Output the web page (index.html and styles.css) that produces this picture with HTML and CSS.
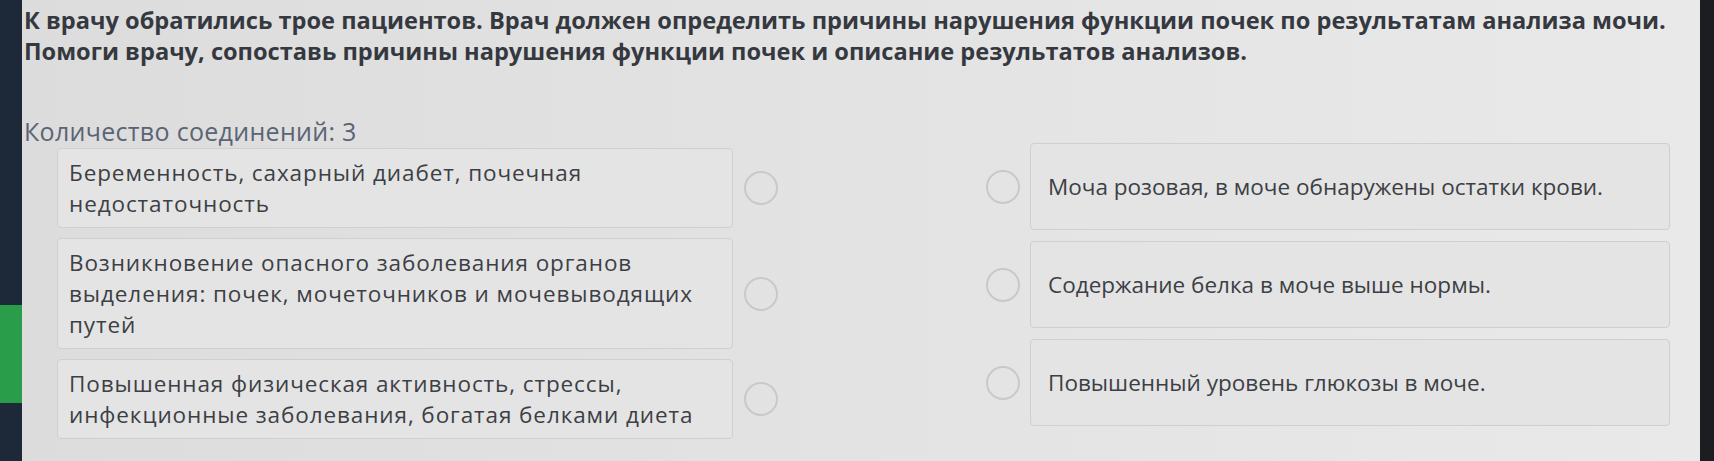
FILE: index.html
```html
<!DOCTYPE html>
<html lang="ru">
<head>
    <meta charset="UTF-8">
    <meta name="viewport" content="width=device-width, initial-scale=1.0">
    <title>Сопоставление</title>
    <link rel="stylesheet" href="styles.css">
</head>
<body>
    <div class="sidebar">
        <div class="sidebar-active"></div>
    </div>

    <div class="task">
        <!-- Question -->
        <p class="question">К врачу обратились трое пациентов. Врач должен определить причины нарушения функции почек по результатам анализа мочи. Помоги врачу, сопоставь причины нарушения функции почек и описание результатов анализов.</p>

        <p class="connections">Количество соединений: 3</p>

        <!-- Matching board -->
        <div class="board">
            <div class="column column-left">
                <div class="item">
                    <div class="card card-left">Беременность, сахарный диабет, почечная недостаточность</div>
                    <span class="dot"></span>
                </div>
                <div class="item">
                    <div class="card card-left">Возникновение опасного заболевания органов выделения: почек, мочеточников и мочевыводящих путей</div>
                    <span class="dot"></span>
                </div>
                <div class="item">
                    <div class="card card-left">Повышенная физическая активность, стрессы, инфекционные заболевания, богатая белками диета</div>
                    <span class="dot"></span>
                </div>
            </div>

            <div class="column column-right">
                <div class="item">
                    <span class="dot"></span>
                    <div class="card card-right">Моча розовая, в моче обнаружены остатки крови.</div>
                </div>
                <div class="item">
                    <span class="dot"></span>
                    <div class="card card-right">Содержание белка в моче выше нормы.</div>
                </div>
                <div class="item">
                    <span class="dot"></span>
                    <div class="card card-right">Повышенный уровень глюкозы в моче.</div>
                </div>
            </div>
        </div>
    </div>

    <div class="edge"></div>
</body>
</html>
```

FILE: styles.css
```css
body {
    font-family: "Open Sans", "Noto Sans", sans-serif;
    background-color: #e1e1e1;
    background-image: linear-gradient(90deg, #dcdcdc 0%, #e3e3e3 50%, #e9e9e9 100%);
    margin: 0;
    padding: 0;
    display: flex;
    height: 461px;
    overflow: hidden;
}

/* Left navigation strip */
.sidebar {
    width: 22px;
    flex-shrink: 0;
    background-color: #1d2838;
}

.sidebar-active {
    margin-top: 305px;
    height: 98px;
    background-color: #2a9d4b;
}

.edge {
    width: 14px;
    flex-shrink: 0;
    margin-left: auto;
    background-color: #1b1d21;
}

.task {
    padding: 5px 0 0 2px;
    flex: 1;
}

.question {
    margin: 0;
    width: 1672px;
    font-size: 23.6px;
    font-weight: 700;
    line-height: 31px;
    color: #35393f;
}

.connections {
    margin: 49px 0 0;
    font-size: 25px;
    letter-spacing: 0.3px;
    line-height: 30px;
    color: #5b6474;
}

.board {
    display: flex;
    margin: 0 0 0 33px;
    width: 1613px;
}

.column {
    display: flex;
    flex-direction: column;
}

.column-left {
    width: 721px;
    gap: 10px;
    margin-top: 2px;
}

.column-right {
    margin-left: auto;
    width: 684px;
    gap: 11px;
    margin-top: -3px;
}

.item {
    display: flex;
    align-items: center;
}

.card {
    border: 1px solid #cfcfcf;
    border-radius: 4px;
    background-color: #e4e4e4;
    color: #3c3f44;
    font-size: 22px;
    line-height: 31px;
    box-sizing: border-box;
}

.card-left {
    width: 676px;
    padding: 8px 12px 8px 11px;
    font-size: 22.5px;
    letter-spacing: 0.9px;
}

.card-right {
    width: 640px;
    min-height: 87px;
    padding: 12px 17px;
    font-size: 22.5px;
    display: flex;
    align-items: center;
}

.dot {
    width: 34px;
    height: 34px;
    border: 2px solid #c9c9c9;
    border-radius: 50%;
    box-sizing: border-box;
    flex-shrink: 0;
}

.column-left .dot {
    margin-left: 11px;
}

.column-right .dot {
    margin-right: 10px;
}
```
